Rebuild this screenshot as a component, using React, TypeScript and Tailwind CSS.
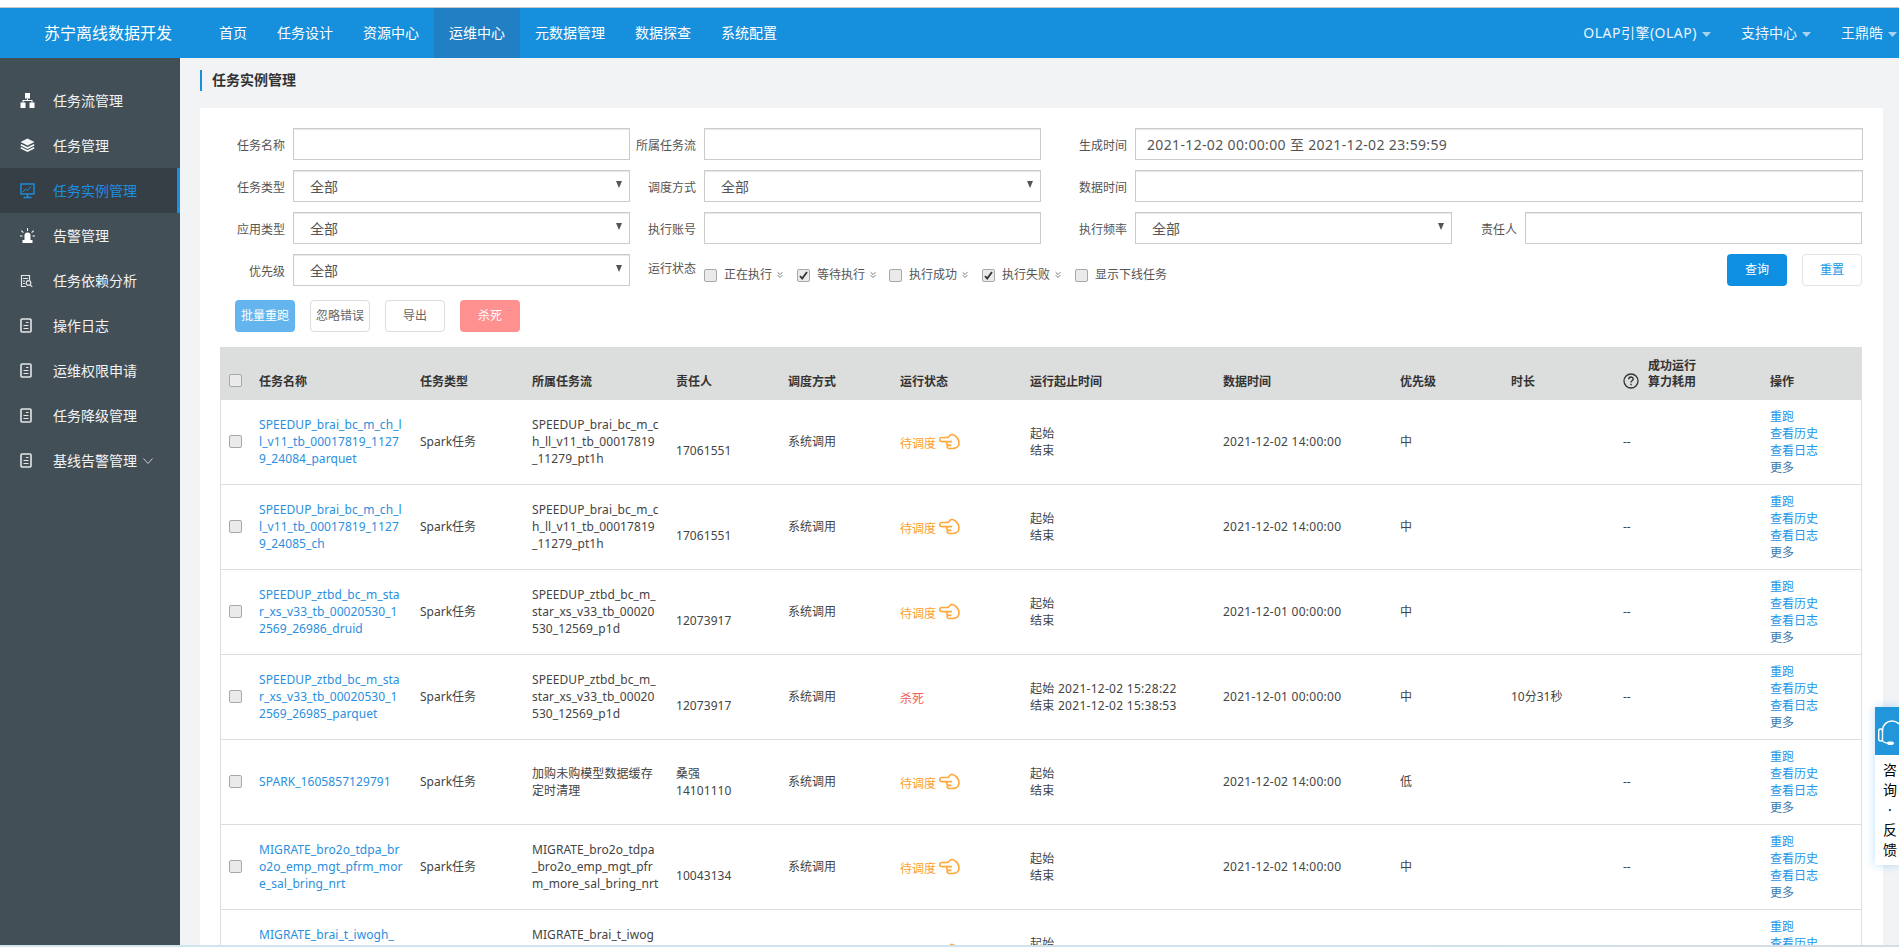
import React from "react";
import { LuChevronsDown } from "react-icons/lu";

const FONT = "font-['Noto_Sans','Noto_Sans_CJK_SC',sans-serif]";

const Caret = () => (
  <svg width="9" height="5" viewBox="0 0 9 5" className="ml-[5px] mt-[2px] shrink-0">
    <path d="M0 0h9L4.5 5z" fill="#a9d3f0" />
  </svg>
);

const Sitemap = () => (
  <svg width="15" height="15" viewBox="0 0 15 15" fill="#fff">
    <rect x="5" y="0" width="5" height="5.5" />
    <rect x="0.5" y="9.5" width="5" height="5.5" />
    <rect x="9.5" y="9.5" width="5" height="5.5" />
    <path d="M7 5.5h1V7h4.5v2.5h-1V8h-8v1.5h-1V7H7z" />
  </svg>
);
const Layers = () => (
  <svg width="15" height="15" viewBox="0 0 15 15">
    <path d="M7.5 0.5L14.5 4 7.5 7.5.5 4z" fill="#f4f5f6" />
    <path d="M.8 6.8L7.5 10l6.7-3.2M.8 9.8L7.5 13l6.7-3.2" fill="none" stroke="#f4f5f6" strokeWidth="1.7" />
  </svg>
);
const Monitor = () => (
  <svg width="15" height="16" viewBox="0 0 15 16" fill="none" stroke="#1b8fe0">
    <rect x="1" y="1" width="13" height="10" strokeWidth="1.4" />
    <path d="M3 9l2.5-3 2 1.5L11 3.5" strokeWidth="1" />
    <path d="M7.5 11v3M3.5 14.5h8" strokeWidth="1.4" />
  </svg>
);
const Alarm = () => (
  <svg width="15" height="15" viewBox="0 0 15 15" fill="#fff">
    <path d="M4.5 12V7.5a3 3 0 016 0V12z" />
    <rect x="2.5" y="12" width="10" height="3" />
    <path d="M7 0h1v3H7zM1 3l.7-.7 2 2L3 5zM14 3l-.7-.7-2 2 .7.7zM0 7.5h2.5v1H0zM12.5 7.5H15v1h-2.5z" />
  </svg>
);
const Doc = () => (
  <svg width="12" height="15" viewBox="0 0 12 15" fill="none" stroke="#e4e6e8">
    <rect x="1" y="1" width="10" height="13" rx="1" strokeWidth="1.6" />
    <path d="M6 4.5h2.5M3.5 7.5h5M3.5 10.5h5" strokeWidth="1.2" />
  </svg>
);
const SearchDoc = () => (
  <svg width="13" height="14" viewBox="0 0 13 14" fill="none" stroke="#e4e6e8" strokeWidth="1.2">
    <path d="M6 12.5H1.5v-11h8V6M3 4.5h5M3 7h2M3 9.5h2" />
    <circle cx="8.5" cy="9" r="2.3" />
    <path d="M10.2 10.8l2 2" />
  </svg>
);
const Hand = () => (
  <svg width="21" height="17" viewBox="0 0 21 17" fill="none" stroke="#ffa93d" strokeWidth="1.7" className="ml-[3px] -mt-[3px] shrink-0">
    <path d="M2.5 4.5H9L12 1.5h1.5C17 2.5 20 6 20 10c0 3.5-3 5.5-6.5 5.5h-3.5c-1.8 0-2.4-2.2-1.2-3.2-1.5-.6-1.5-3 0-3.6H3.5C1.5 8.7.3 7.6.8 6.2 1 5.2 1.6 4.5 2.5 4.5z" />
    <path d="M8.8 8.7H13M8.8 12.3H12.5" />
  </svg>
);

const sideItems: [string, React.ReactNode, boolean?][] = [
  ["任务流管理", <Sitemap />],
  ["任务管理", <Layers />],
  ["任务实例管理", <Monitor />, true],
  ["告警管理", <Alarm />],
  ["任务依赖分析", <SearchDoc />],
  ["操作日志", <Doc />],
  ["运维权限申请", <Doc />],
  ["任务降级管理", <Doc />],
  ["基线告警管理", <Doc />],
];

const SelectArrow = () => (
  <svg width="6" height="7" viewBox="0 0 6 7" className="shrink-0">
    <path d="M0 0h6L3 7z" fill="#555" />
  </svg>
);

const Label = ({ w, children }: { w: string; children: React.ReactNode }) => (
  <label className={`${w} shrink-0 pr-2 pt-[3px] text-right text-xs text-[#555]`}>{children}</label>
);

const boxCls =
  "h-8 shrink-0 flex items-center border border-[#ccc] bg-white shadow-[inset_0_1px_1px_rgba(0,0,0,0.1)] text-sm text-[#555]";

const Input = ({ w, value }: { w: string; value?: string }) => (
  <div className={`${w} ${boxCls} pl-[11px] pt-[1px] tracking-[0.35px]`}>{value}</div>
);
const Select = ({ w }: { w: string }) => (
  <div className={`${w} ${boxCls} justify-between pl-4 pr-[7px]`}>
    <span className="pt-[1px]">全部</span>
    <span className="-mt-[3px]">
      <SelectArrow />
    </span>
  </div>
);

const Check = ({ on }: { on?: boolean }) => (
  <span className="w-[13px] h-[13px] shrink-0 rounded-[2px] border border-[#a8a8a8] bg-[#eaeaea] flex items-center justify-center">
    {on && (
      <svg width="9" height="9" viewBox="0 0 9 9" fill="none" stroke="#333" strokeWidth="1.8">
        <path d="M1 5l2.2 2.5L8 1" />
      </svg>
    )}
  </span>
);

const StatusCheck = ({ text, on, chevron = true, w }: { text: string; on?: boolean; chevron?: boolean; w: string }) => (
  <div className={`${w} shrink-0 flex items-center text-xs text-[#555]`}>
    <Check on={on} />
    <span className="ml-[7px]">{text}</span>
    {chevron && <LuChevronsDown size={10} color="#777" strokeWidth={2.4} className="ml-[3px]" />}
  </div>
);

const Btn = ({ cls, children }: { cls: string; children: React.ReactNode }) => (
  <button className={`w-[60px] h-8 rounded text-xs ${cls}`}>{children}</button>
);

type Row = {
  name: string[];
  flow: string[];
  owner: string[];
  date: string;
  prio: string;
  killed?: boolean;
  start?: string;
  end?: string;
  dur?: string;
};

const rows: Row[] = [
  {
    name: ["SPEEDUP_brai_bc_m_ch_l", "l_v11_tb_00017819_1127", "9_24084_parquet"],
    flow: ["SPEEDUP_brai_bc_m_c", "h_ll_v11_tb_00017819", "_11279_pt1h"],
    owner: ["\u00a0", "17061551"],
    date: "2021-12-02 14:00:00",
    prio: "中",
  },
  {
    name: ["SPEEDUP_brai_bc_m_ch_l", "l_v11_tb_00017819_1127", "9_24085_ch"],
    flow: ["SPEEDUP_brai_bc_m_c", "h_ll_v11_tb_00017819", "_11279_pt1h"],
    owner: ["\u00a0", "17061551"],
    date: "2021-12-02 14:00:00",
    prio: "中",
  },
  {
    name: ["SPEEDUP_ztbd_bc_m_sta", "r_xs_v33_tb_00020530_1", "2569_26986_druid"],
    flow: ["SPEEDUP_ztbd_bc_m_", "star_xs_v33_tb_00020", "530_12569_p1d"],
    owner: ["\u00a0", "12073917"],
    date: "2021-12-01 00:00:00",
    prio: "中",
  },
  {
    name: ["SPEEDUP_ztbd_bc_m_sta", "r_xs_v33_tb_00020530_1", "2569_26985_parquet"],
    flow: ["SPEEDUP_ztbd_bc_m_", "star_xs_v33_tb_00020", "530_12569_p1d"],
    owner: ["\u00a0", "12073917"],
    date: "2021-12-01 00:00:00",
    prio: "中",
    killed: true,
    start: "2021-12-02 15:28:22",
    end: "2021-12-02 15:38:53",
    dur: "10分31秒",
  },
  {
    name: ["SPARK_1605857129791"],
    flow: ["加购未购模型数据缓存", "定时清理"],
    owner: ["桑强", "14101110"],
    date: "2021-12-02 14:00:00",
    prio: "低",
  },
  {
    name: ["MIGRATE_bro2o_tdpa_br", "o2o_emp_mgt_pfrm_mor", "e_sal_bring_nrt"],
    flow: ["MIGRATE_bro2o_tdpa", "_bro2o_emp_mgt_pfr", "m_more_sal_bring_nrt"],
    owner: ["\u00a0", "10043134"],
    date: "2021-12-02 14:00:00",
    prio: "中",
  },
  {
    name: ["MIGRATE_brai_t_iwogh_", "\u00a0", "\u00a0"],
    flow: ["MIGRATE_brai_t_iwog", "\u00a0", "\u00a0"],
    owner: ["\u00a0", "\u00a0"],
    date: "2021-12-02 14:00:00",
    prio: "中",
  },
];

const Lines = ({ lines }: { lines: string[] }) => (
  <>
    {lines.map((l, i) => (
      <div key={i}>{l}</div>
    ))}
  </>
);

const thCls = "pb-[10px] align-bottom text-left text-xs font-bold text-[#333]";
const LAT = "tracking-[0.07px]";

export default function App() {
  return (
    <div className={`${FONT} relative h-screen w-full overflow-hidden flex flex-col bg-white`}>
      <div className="h-2 shrink-0 border-b border-[#c8c8c8] bg-white" />
      <header className="h-[50px] shrink-0 flex items-center bg-[#168fdc] text-white">
        <div className="w-[204px] shrink-0 pl-[44px] text-base">苏宁离线数据开发</div>
        <nav className="flex h-full text-sm">
          {["首页", "任务设计", "资源中心", "运维中心", "元数据管理", "数据探查", "系统配置"].map((t) => (
            <a key={t} className={`h-full px-[15px] flex items-center ${t === "运维中心" ? "bg-[#2180c4]" : ""}`}>
              {t}
            </a>
          ))}
        </nav>
        <div className="ml-auto flex items-center text-sm text-[#eaf5fc]">
          <span className="flex items-center tracking-[0.5px]">OLAP引擎(OLAP)<Caret /></span>
          <span className="flex items-center ml-[30px]">支持中心<Caret /></span>
          <span className="flex items-center ml-[30px]">王鼎皓<Caret /></span>
          <span className="w-[2px]" />
        </div>
      </header>
      <div className="flex flex-1 min-h-0">
        <aside className="w-[180px] shrink-0 bg-[#424f57] pt-5">
          {sideItems.map(([t, icon, active]) => (
            <div
              key={t}
              className={`h-[45px] flex items-center text-sm ${
                active ? "bg-[#363e46] text-[#1b8fe0] border-r-[3px] border-[#1b8fe0]" : "text-[#f2f3f4]"
              }`}
            >
              <span className="w-[53px] pl-5 shrink-0 flex items-center">{icon}</span>
              <span>{t}</span>
              {t === "基线告警管理" && (
                <svg width="10" height="6" viewBox="0 0 10 6" fill="none" stroke="#c9ced2" className="ml-[6px]">
                  <path d="M.5.5L5 5.5 9.5.5" />
                </svg>
              )}
            </div>
          ))}
        </aside>
        <main className="flex-1 min-w-0 bg-[#f1f3f5] pl-5 pr-4 flex flex-col">
          <div className="h-[50px] shrink-0 pt-3">
            <div className="h-[21px] border-l-2 border-[#168fdc] pl-[10px] pb-[2px] flex items-center text-sm font-bold text-[#333]">
              任务实例管理
            </div>
          </div>
          <section className="flex-1 min-h-0 bg-white pt-5 overflow-hidden">
            <div className="flex flex-col gap-[10px]">
              <div className="flex items-center">
                <Label w="w-[93px]">任务名称</Label>
                <Input w="w-[337px]" />
                <Label w="w-[74px]">所属任务流</Label>
                <Input w="w-[337px]" />
                <Label w="w-[94px]">生成时间</Label>
                <Input w="w-[728px]" value="2021-12-02 00:00:00 至 2021-12-02 23:59:59" />
              </div>
              <div className="flex items-center">
                <Label w="w-[93px]">任务类型</Label>
                <Select w="w-[337px]" />
                <Label w="w-[74px]">调度方式</Label>
                <Select w="w-[337px]" />
                <Label w="w-[94px]">数据时间</Label>
                <Input w="w-[728px]" />
              </div>
              <div className="flex items-center">
                <Label w="w-[93px]">应用类型</Label>
                <Select w="w-[337px]" />
                <Label w="w-[74px]">执行账号</Label>
                <Input w="w-[337px]" />
                <Label w="w-[94px]">执行频率</Label>
                <Select w="w-[317px]" />
                <Label w="w-[73px]">责任人</Label>
                <Input w="w-[337px]" />
              </div>
              <div className="flex items-center">
                <Label w="w-[93px]">优先级</Label>
                <Select w="w-[337px]" />
                <label className="w-[74px] shrink-0 pr-2 -mt-[3px] text-right text-xs text-[#555]">运行状态</label>
                <div className="flex items-center pt-[10px]">
                  <StatusCheck w="w-[93px]" text="正在执行" />
                  <StatusCheck w="w-[92px]" text="等待执行" on />
                  <StatusCheck w="w-[93px]" text="执行成功" />
                  <StatusCheck w="w-[93px]" text="执行失败" on />
                  <StatusCheck w="w-[120px]" text="显示下线任务" chevron={false} />
                </div>
                <div className="ml-auto mr-[21px] flex gap-[15px]">
                  <Btn cls="bg-[#0f8fe2] text-white">查询</Btn>
                  <Btn cls="bg-white border border-[#dde4ea] text-[#2196e8]">重置</Btn>
                </div>
              </div>
            </div>
            <div className="mt-[14px] ml-[35px] flex gap-[15px]">
              <Btn cls="bg-[#64b5ee] text-white">批量重跑</Btn>
              <Btn cls="bg-white border border-[#ddd] text-[#666]">忽略错误</Btn>
              <Btn cls="bg-white border border-[#ddd] text-[#666]">导出</Btn>
              <Btn cls="bg-[#ff9090] text-white">杀死</Btn>
            </div>
            <div className="mt-[15px] ml-5 w-[1642px] border-x border-[#ddd]">
              <table className="w-[1640px] table-fixed border-collapse text-xs text-[#444] leading-[17px]">
                <colgroup>
                  <col className="w-[38px]" />
                  <col className="w-[161px]" />
                  <col className="w-[112px]" />
                  <col className="w-[144px]" />
                  <col className="w-[112px]" />
                  <col className="w-[112px]" />
                  <col className="w-[130px]" />
                  <col className="w-[193px]" />
                  <col className="w-[177px]" />
                  <col className="w-[111px]" />
                  <col className="w-[112px]" />
                  <col className="w-[147px]" />
                  <col className="w-[91px]" />
                </colgroup>
                <thead>
                  <tr className="h-[53px] bg-[#dcdddd]">
                    <th className={`${thCls} pl-2`}>
                      <div className="pb-[3px]"><Check /></div>
                    </th>
                    <th className={thCls}>任务名称</th>
                    <th className={thCls}>任务类型</th>
                    <th className={thCls}>所属任务流</th>
                    <th className={thCls}>责任人</th>
                    <th className={thCls}>调度方式</th>
                    <th className={thCls}>运行状态</th>
                    <th className={thCls}>运行起止时间</th>
                    <th className={thCls}>数据时间</th>
                    <th className={thCls}>优先级</th>
                    <th className={thCls}>时长</th>
                    <th className={thCls}>
                      <div className="flex items-end">
                        <svg width="16" height="16" viewBox="0 0 16 16" fill="none" stroke="#333" className="mb-[1px] mr-[9px] shrink-0">
                          <circle cx="8" cy="8" r="7" strokeWidth="1.3" />
                          <path d="M5.8 6.3c0-3 4.4-3 4.4-.2 0 1.8-2.2 1.6-2.2 3.4" strokeWidth="1.4" />
                          <path d="M8 10.8v1.5" strokeWidth="1.4" />
                        </svg>
                        <div>成功运行<br />算力耗用</div>
                      </div>
                    </th>
                    <th className={thCls}>操作</th>
                  </tr>
                </thead>
                <tbody>
                  {rows.map((r, i) => (
                    <tr key={i} className={`${i === 0 ? "h-[84px]" : "h-[85px]"} border-b border-[#ddd]`}>
                      <td className="pl-2"><Check /></td>
                      <td className={`text-[#2a8fe0] ${LAT}`}><Lines lines={r.name} /></td>
                      <td>Spark任务</td>
                      <td className={LAT}><Lines lines={r.flow} /></td>
                      <td className={LAT}><Lines lines={r.owner} /></td>
                      <td>系统调用</td>
                      <td className="pt-[3px]">
                        {r.killed ? (
                          <span className="text-[#f45a5a]">杀死</span>
                        ) : (
                          <span className="flex items-center text-[#fca130]">
                            待调度
                            <Hand />
                          </span>
                        )}
                      </td>
                      <td className="tracking-[0.28px]">
                        <div>起始{r.start ? ` ${r.start}` : ""}</div>
                        <div>结束{r.end ? ` ${r.end}` : ""}</div>
                      </td>
                      <td className="tracking-[0.26px]">{r.date}</td>
                      <td>{r.prio}</td>
                      <td>{r.dur}</td>
                      <td>--</td>
                      <td className="text-[#2196e8]">
                        <div>重跑</div>
                        <div>查看历史</div>
                        <div>查看日志</div>
                        <div className="text-[#3a78b0]">更多</div>
                      </td>
                    </tr>
                  ))}
                </tbody>
              </table>
            </div>
          </section>
        </main>
      </div>

      <aside className="absolute right-0 top-[707px] w-6 h-[158px] bg-white shadow-[0_0_10px_rgba(33,150,232,0.3)] overflow-hidden">
        <div className="h-12 bg-[#2196db] pl-[3px] pt-[13px]">
          <svg width="30" height="26" viewBox="0 0 30 26" fill="none" stroke="#fff">
            <path d="M4.5 11V10C4.5 5 9 1 14 1s10 4 10 9v1" strokeWidth="1.5" />
            <rect x="0.7" y="9" width="3.8" height="12" rx="1.8" strokeWidth="1.4" />
            <path d="M4 20c1 2 3 3 6 3" strokeWidth="1.4" />
            <rect x="9.5" y="22" width="6" height="2.5" rx="1.2" fill="#fff" strokeWidth="1" />
          </svg>
        </div>
        <div className="pl-2 pt-[5px] text-sm leading-5 text-black">
          <div>咨</div>
          <div>询</div>
          <div className="pl-[5px]">·</div>
          <div>反</div>
          <div>馈</div>
        </div>
      </aside>
      <div className="absolute bottom-0 inset-x-0 h-[2px] bg-[linear-gradient(90deg,#cfe6ef,#d0e3ee_70%,#d4dce6)]" />
    </div>
  );
}
